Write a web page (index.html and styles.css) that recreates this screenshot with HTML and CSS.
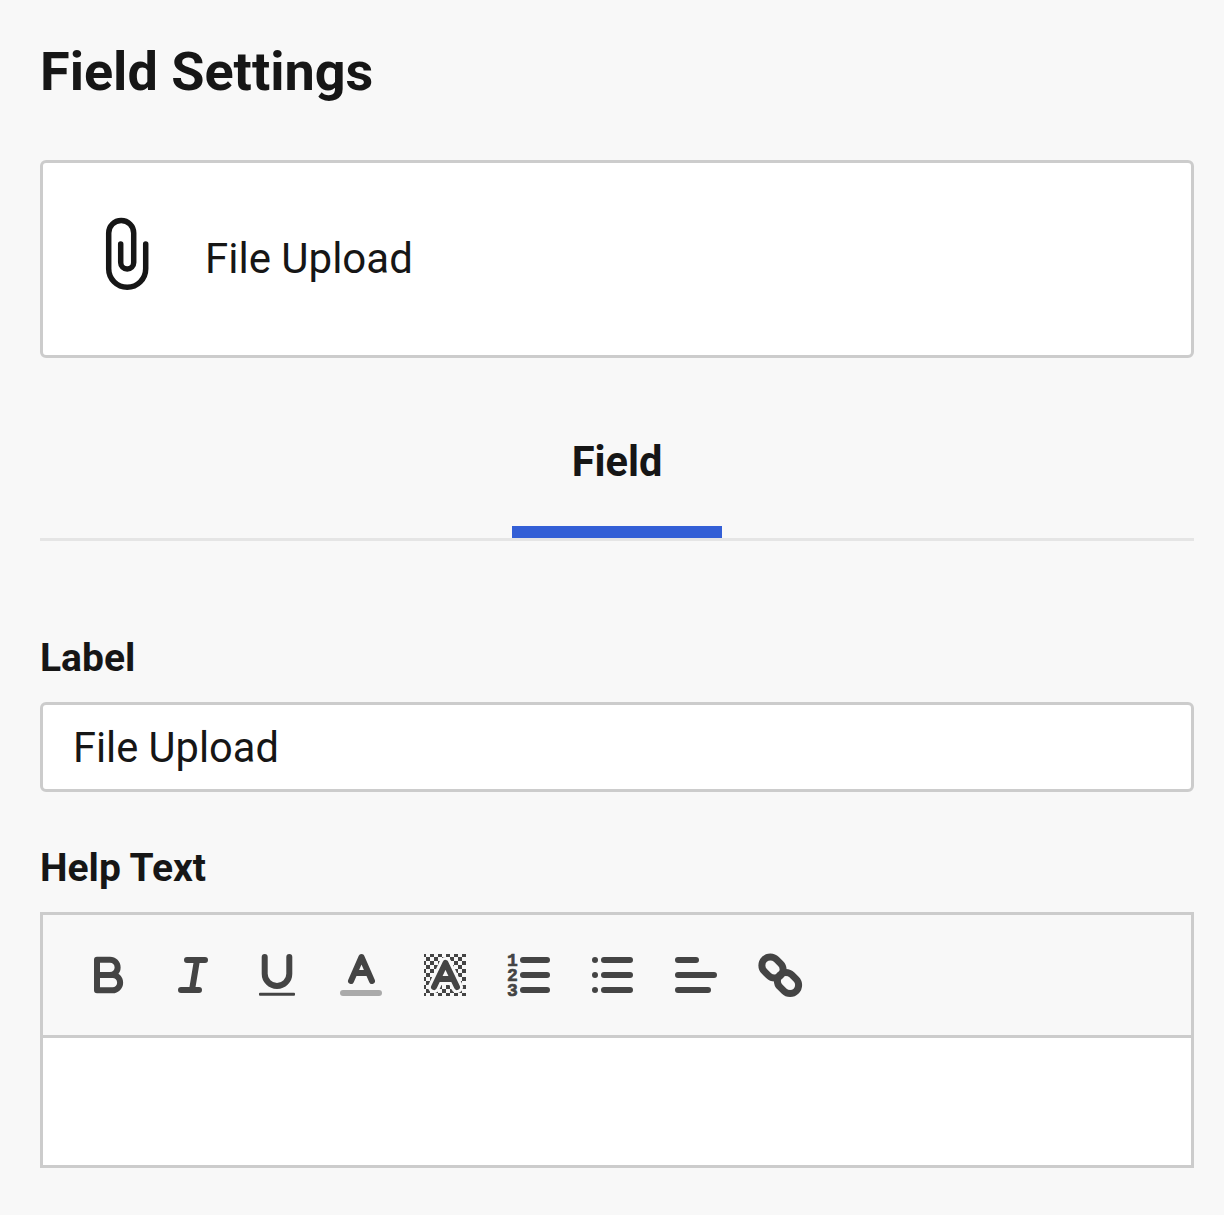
FILE: index.html
```html
<!DOCTYPE html>
<html lang="en">
<head>
  <meta charset="UTF-8">
  <title>Field Settings</title>
  <link rel="stylesheet" href="styles.css">
</head>
<body>
  <div class="panel">
    <h1>Field Settings</h1>

    <div class="field-card">
      <svg class="clip-icon" width="48" height="76" viewBox="104 216 48 76">
        <path d="M145.7 244V268.8a18.5 18.5 0 0 1-37 0V233a12.5 12.5 0 0 1 25 0V262.5a6.5 6.5 0 0 1-13 0V244"/>
      </svg>
      <span class="card-name">File Upload</span>
    </div>

    <div class="tabs">
      <div class="tab">Field</div>
    </div>

    <label class="label label-first">Label</label>
    <input class="text-input" type="text" value="File Upload">

    <label class="label label-help">Help Text</label>
    <div class="editor">
      <div class="toolbar">
        <!-- bold -->
        <svg class="tool" viewBox="0 0 44 44"><path d="M11 6.75H24a7.6 7.6 0 0 1 0 15.25H26.5a7.6 7.6 0 0 1 0 15.25H11ZM11 22H24"/></svg>
        <!-- italic -->
        <svg class="tool" viewBox="0 0 44 44"><path d="M17 7H35M11 37H29M27 7L22 37"/></svg>
        <!-- underline -->
        <svg class="tool" viewBox="0 0 44 44"><path d="M10.7 4V20.7a12.3 12.3 0 0 0 24.6 0V4"/><rect class="solid" x="5" y="39.7" width="36" height="3" rx="1"/></svg>
        <!-- font colour -->
        <svg class="tool" viewBox="0 0 44 44"><path d="M13 28L23.5 4L34 28M16.5 20H30.5"/><rect class="swatch" x="2" y="37" width="42" height="6" rx="3"/></svg>
        <!-- background colour -->
        <svg class="tool" viewBox="0 0 44 44">
          <defs>
            <pattern id="checks" width="8" height="8" patternUnits="userSpaceOnUse">
              <rect class="solid" width="4" height="4"/>
              <rect class="solid" x="4" y="4" width="4" height="4"/>
            </pattern>
          </defs>
          <rect class="checks" x="2" y="1" width="42" height="42"/>
          <path class="halo" d="M12 34L23.5 10L35 34M16 26H31"/>
          <path d="M12 34L23.5 10L35 34M16 26H31"/>
        </svg>
        <!-- ordered list -->
        <svg class="tool" viewBox="0 0 44 44">
          <path d="M17 7H41M17 22H41M17 37H41"/>
          <text x="1" y="13">1</text>
          <text x="1" y="28">2</text>
          <text x="1" y="43">3</text>
        </svg>
        <!-- bullet list -->
        <svg class="tool" viewBox="0 0 44 44">
          <path d="M14 7H40M14 22H40M14 37H40"/>
          <circle class="solid" cx="5" cy="7" r="3"/>
          <circle class="solid" cx="5" cy="22" r="3"/>
          <circle class="solid" cx="5" cy="37" r="3"/>
        </svg>
        <!-- align -->
        <svg class="tool" viewBox="0 0 44 44"><path d="M4 7H22M4 22H40M4 37H34"/></svg>
        <!-- link -->
        <svg class="tool" viewBox="0 0 44 44">
          <rect class="link-part" x="3" y="6" width="23" height="17" rx="8.5" transform="rotate(45 14.5 14.5)"/>
          <rect class="link-part" x="18.5" y="21.5" width="23" height="17" rx="8.5" transform="rotate(45 30 30)"/>
        </svg>
      </div>
      <div class="editor-body"></div>
    </div>
  </div>
</body>
</html>
```

FILE: styles.css
```css
body {
  margin: 0;
  background-color: #f8f8f8;
  color: #161616;
  font-family: Roboto, sans-serif;
}
.panel {
  padding: 0 30px 47px 40px;
}
h1 {
  margin: 0;
  padding-top: 38px;
  height: 160px;
  box-sizing: border-box;
  font-size: 54px;
  line-height: 68px;
  font-weight: 700;
}
.field-card {
  display: flex;
  align-items: center;
  height: 198px;
  box-sizing: border-box;
  background: white;
  border: 3px solid #ccc;
  border-radius: 6px;
  padding-left: 61px;
  font-size: 42px;
}
.clip-icon {
  margin-right: 53px;
  margin-bottom: 10px;
}
.clip-icon path {
  fill: none;
  stroke: #161616;
  stroke-width: 5.5;
  stroke-linecap: round;
}
.card-name {
  margin-bottom: 2px;
}
.tabs {
  display: flex;
  justify-content: center;
  height: 183px;
  box-sizing: border-box;
  border-bottom: 3px solid #e5e5e5;
}
.tab {
  width: 210px;
  height: 180px;
  box-sizing: border-box;
  padding-top: 77px;
  border-bottom: 12px solid #335fd6;
  text-align: center;
  font-size: 41.6px;
  line-height: 54px;
  font-weight: 700;
}
.label {
  display: block;
  font-size: 39px;
  line-height: 48px;
  font-weight: 700;
}
.label-first {
  margin-top: 93px;
  margin-bottom: 20px;
}
.label-help {
  margin-top: 52px;
  margin-bottom: 20px;
}
.text-input {
  display: block;
  width: 100%;
  height: 90px;
  box-sizing: border-box;
  padding: 0 31px 0 30px;
  background: white;
  border: 3px solid #ccc;
  border-radius: 6px;
  color: #161616;
  font-family: Roboto, sans-serif;
  font-size: 41.6px;
}
.editor {
  border: 3px solid #ccc;
}
.toolbar {
  display: flex;
  gap: 40px;
  padding: 38px 0 38px 43px;
  border-bottom: 3px solid #ccc;
}
.tool {
  display: block;
  width: 44px;
  height: 44px;
  overflow: visible;
}
.tool path {
  fill: none;
  stroke: #444;
  stroke-width: 6;
  stroke-linecap: round;
  stroke-linejoin: round;
}
.tool .solid {
  fill: #444;
}
.tool .swatch {
  fill: #aaa;
}
.tool .checks {
  fill: url(#checks);
}
.tool path.halo {
  stroke: #f8f8f8;
  stroke-width: 12;
}
.tool text {
  fill: #444;
  stroke: #444;
  stroke-width: 0.6;
  font-family: "Liberation Mono", monospace;
  font-size: 18px;
  font-weight: 700;
}
.tool .link-part {
  fill: none;
  stroke: #444;
  stroke-width: 7;
}
.editor-body {
  height: 127px;
  background: white;
}
```
